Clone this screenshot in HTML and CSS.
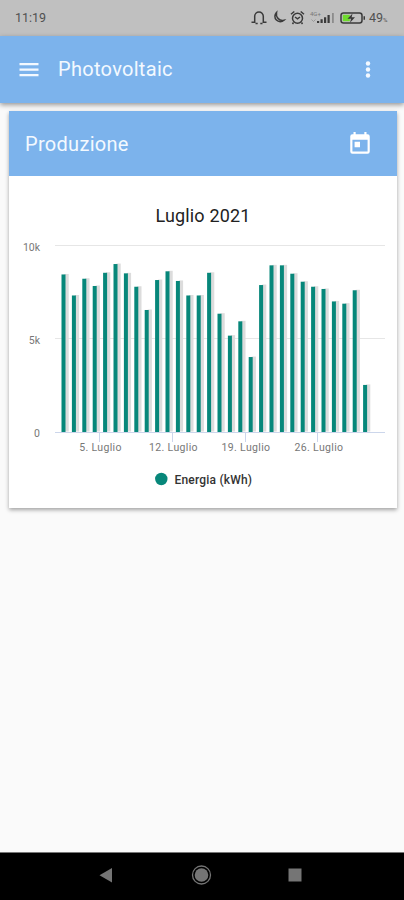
FILE: index.html
```html
<!DOCTYPE html>
<html lang="it">
<head>
    <meta charset="UTF-8">
    <meta name="viewport" content="width=device-width, initial-scale=1.0">
    <title>Photovoltaic</title>
    <link rel="stylesheet" href="styles.css">
</head>
<body>
    <div class="status-bar">
        <span class="clock">11:19</span>
        <svg class="status-icons" width="118" height="20" viewBox="0 0 118 20">
            <!-- bell -->
            <path class="line" d="M1.500 14.300h3.200V8.300a4.300 4.300 0 0 1 8.600 0v6h3.200M5.500 15.500h2.200M10.300 15.500h2.200"/>
            <!-- moon -->
            <path class="line" d="M26.500 4.500A5.300 5.300 0 1 0 34 12.200C29.500 13.200 25.500 9.500 26.500 4.500Z"/>
            <!-- alarm -->
            <circle class="line" cx="47.500" cy="10.200" r="5"/>
            <path class="line" d="M41 6.300l3.300-2.800M54 6.300l-3.300-2.800M45 9l2.500 1.800L50 9M43.500 14.500l-1 1.500M51.500 14.500l1 1.500"/>
            <!-- signal -->
            <text class="net" x="60" y="7.800">4G+</text>
            <path class="weak" d="M61.500 11.500l2 2 2-2"/>
            <path class="bars" d="M67 13h2.200v2H67zM70.500 11.200h2.200V15h-2.200zM74 9.200h2.200V15H74zM77.500 7h2.200v8h-2.200z"/>
            <path class="bars faint" d="M82 5h1.800v10H82z"/>
            <!-- battery -->
            <rect class="line" x="91" y="5" width="21" height="10" rx="2.500"/>
            <path class="charge" d="M92.800 6.800h7v6.400h-7z"/>
            <path class="bars" d="M102.500 5.500l-5 5.300h3.500l-1 4 5-5.500h-3.300zM113.500 8.300h1.500v3.500h-1.500z"/>
        </svg>
        <span class="battery">49<small>%</small></span>
    </div>

    <div class="app-bar">
        <svg class="menu" width="24" height="24" viewBox="0 0 24 24">
            <path d="M2.500 6h19v2.200h-19zM2.500 11.500h19v2.200h-19zM2.500 17h19v2.200h-19z"/>
        </svg>
        <h1>Photovoltaic</h1>
        <svg class="more" width="24" height="24" viewBox="0 0 24 24">
            <circle cx="12" cy="6.500" r="2.200"/>
            <circle cx="12" cy="12.500" r="2.200"/>
            <circle cx="12" cy="18.500" r="2.200"/>
        </svg>
    </div>

    <div class="content">
        <div class="card">
            <div class="card-header">
                <h2>Produzione</h2>
                <svg width="26" height="26" viewBox="0 0 24 24">
                    <path d="M19 3h-1V1h-2v2H8V1H6v2H5a2 2 0 0 0-2 2v14a2 2 0 0 0 2 2h14a2 2 0 0 0 2-2V5a2 2 0 0 0-2-2zm0 16H5V8h14v11zM7 10h5v5H7z"/>
                </svg>
            </div>
            <svg id="chart" class="chart" width="388" height="332" viewBox="0 0 388 332">
                <text class="title" x="194" y="46">Luglio 2021</text>
                <path class="grid" d="M46 69.500h330M46 162.500h330"/>
                <path class="axis" d="M46 256.500h330M90.500 256v10M163.500 256v10M236.500 256v10M308.500 256v10"/>
                <g class="y-labels">
                    <text x="31" y="75">10k</text>
                    <text x="31" y="168">5k</text>
                    <text x="31" y="261">0</text>
                </g>
                <g id="columns"></g>
                <g class="x-labels">
                    <text x="91.500" y="275">5. Luglio</text>
                    <text x="164.500" y="275">12. Luglio</text>
                    <text x="237" y="275">19. Luglio</text>
                    <text x="310" y="275">26. Luglio</text>
                </g>
                <circle class="dot" cx="152.300" cy="303" r="6.200"/>
                <text class="legend" x="165.500" y="308">Energia (kWh)</text>
            </svg>
        </div>
    </div>

    <div class="nav-bar">
        <svg width="24" height="24" viewBox="0 0 24 24"><path d="M18 5v14.500L5.500 12.200z"/></svg>
        <svg width="24" height="24" viewBox="0 0 24 24">
            <circle class="ring" cx="12.500" cy="12" r="9"/>
            <circle cx="12.500" cy="12" r="6.800"/>
        </svg>
        <svg width="24" height="24" viewBox="0 0 24 24"><path d="M5.500 5.500h13v13h-13z"/></svg>
    </div>

    <script>
        // daily production, thousands of kWh
        var values = [8.47, 7.34, 8.24, 7.85, 8.56, 9.03, 8.53, 7.81, 6.56, 8.17,
                      8.64, 8.12, 7.34, 7.34, 8.56, 6.36, 5.18, 5.95, 4.03, 7.9,
                      8.96, 8.96, 8.51, 8.08, 7.81, 7.69, 7.02, 6.9, 7.62, 2.53];
        var columns = document.getElementById('columns');

        function addRect(name, x, y, width, height) {
            var rect = document.createElementNS('http://www.w3.org/2000/svg', 'rect');
            rect.setAttribute('class', name);
            rect.setAttribute('x', x);
            rect.setAttribute('y', y);
            rect.setAttribute('width', width);
            rect.setAttribute('height', height);
            columns.appendChild(rect);
        }

        for (var i = 0; i < values.length; i++) {
            var x = 52.5 + i * 10.4;
            var height = values[i] * 18.6;
            addRect('shade', x + 3, 255.5 - height, 4.2, height);
            addRect('column', x, 256 - height, 4, height);
        }
    </script>
</body>
</html>
```

FILE: styles.css
```css
body {
    margin: 0;
    height: 100vh;
    display: flex;
    flex-direction: column;
    overflow: hidden;
    background-color: #fafafa;
    font-family: Roboto, "Liberation Sans", sans-serif;
}

h1, h2 {
    margin: 0;
    color: #f3f9ff;
    font-size: 20px;
    font-weight: 400;
    letter-spacing: 0.3px;
}

.status-bar {
    display: flex;
    align-items: center;
    height: 36px;
    box-sizing: border-box;
    padding: 0 13px 1px 15px;
    background-color: #c0c0c0;
    color: #505050;
    font-size: 12.5px;
}

.clock {
    flex: 1;
}

.status-icons {
    margin-right: 1px;
}

.battery {
    width: 22px;
    white-space: nowrap;
}

.battery small {
    font-size: 6px;
}

.line {
    fill: none;
    stroke: #3a3a3a;
    stroke-width: 1.5;
}

.net {
    font-size: 6px;
    fill: #777;
}

.weak {
    fill: none;
    stroke: #999;
}

.bars {
    fill: #3a3a3a;
}

.faint {
    fill: #8c8c8c;
}

.charge {
    fill: #6edb2c;
}

.app-bar {
    position: relative;
    display: flex;
    align-items: center;
    height: 67px;
    box-sizing: border-box;
    padding: 0 24px 1px 17px;
    background-color: #7cb3ec;
    box-shadow: 0 2px 5px rgba(0, 0, 0, 0.4);
    fill: #f3f9ff;
}

.app-bar h1 {
    flex: 1;
    margin-left: 17px;
}

.content {
    flex: 1;
    padding: 8px 7px 0 9px;
}

.card {
    background-color: #fff;
    box-shadow: 0 2px 4px rgba(0, 0, 0, 0.35);
}

.card-header {
    display: flex;
    align-items: center;
    justify-content: space-between;
    height: 65px;
    padding: 0 24px 0 16px;
    background-color: #7cb3ec;
    fill: #fff;
}

.chart {
    display: block;
}

.title {
    font-size: 18px;
    letter-spacing: 0.15px;
    fill: #222;
    text-anchor: middle;
}

.grid {
    stroke: #e6e6e6;
}

.axis {
    fill: none;
    stroke: #ccd6eb;
}

.x-labels, .y-labels {
    font-size: 10.5px;
    letter-spacing: 0.35px;
    fill: #777;
    text-anchor: middle;
}

.y-labels {
    letter-spacing: 0;
    text-anchor: end;
}

.shade {
    fill: #dcdcdc;
}

.column, .dot {
    fill: #07877a;
}

.legend {
    font-size: 12px;
    font-weight: 500;
    letter-spacing: 0.2px;
    fill: #333;
}

.nav-bar {
    display: flex;
    align-items: center;
    justify-content: space-between;
    height: 48px;
    box-sizing: border-box;
    padding: 0 97px 3px 94px;
    border-top: 1px solid #777;
    background-color: #000;
    fill: #757575;
}

.ring {
    fill: none;
    stroke: #757575;
    stroke-width: 1.3;
}
```
